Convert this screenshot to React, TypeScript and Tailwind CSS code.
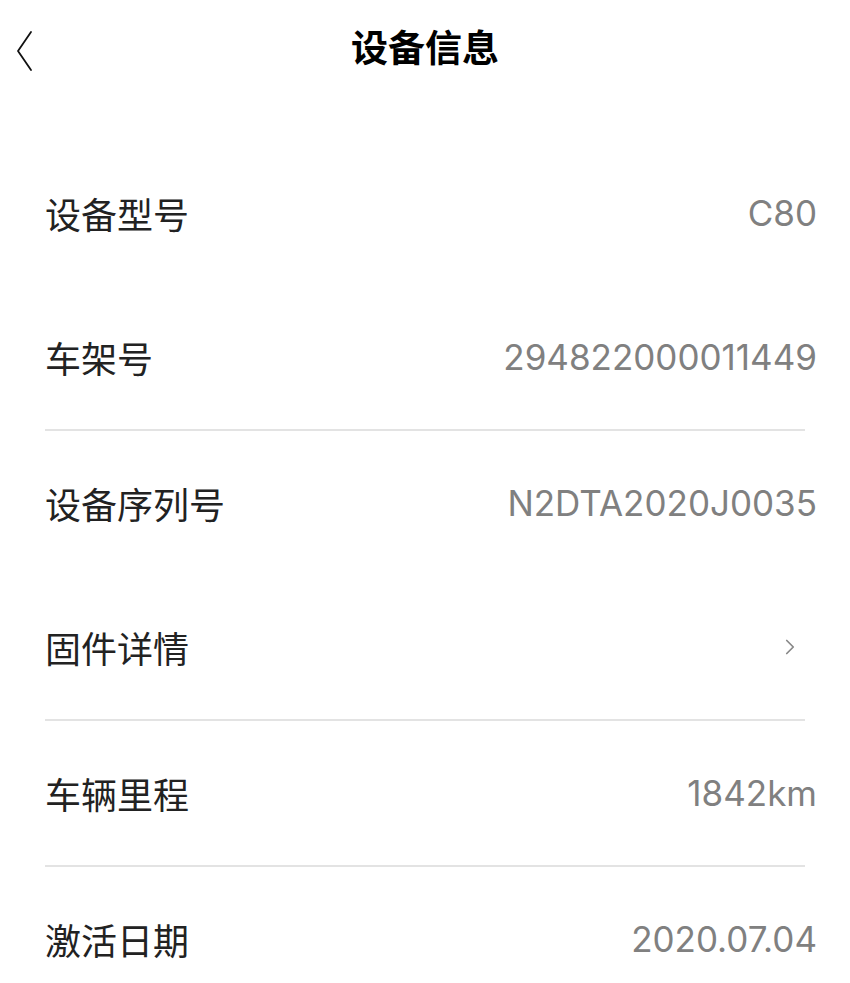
import { ChevronRight } from 'lucide-react';

interface InfoRow {
  label: string;
  value?: string;
  link?: boolean;
  dividerBefore?: boolean;
}

const rows: InfoRow[] = [
  { label: '设备型号', value: 'C80' },
  { label: '车架号', value: '294822000011449' },
  { label: '设备序列号', value: 'N2DTA2020J0035', dividerBefore: true },
  { label: '固件详情', link: true },
  { label: '车辆里程', value: '1842km', dividerBefore: true },
  { label: '激活日期', value: '2020.07.04', dividerBefore: true },
];

export default function App() {
  return (
    <div className="w-[850px] h-[983px] overflow-hidden bg-white font-['Inter','Noto_Sans_CJK_SC',sans-serif]">
      {/* 顶部导航 */}
      <div className="h-[141px]">
        <div className="h-[94px] flex items-center justify-center relative">
          <button className="absolute left-[12px] top-[29px] w-[24px] h-[44px] flex items-center justify-center">
            <svg width="18" height="42" viewBox="0 0 18 42" fill="none">
              <path d="M16 2 L3 21 L16 40" stroke="#111" strokeWidth="1.8" strokeLinecap="round" strokeLinejoin="round" />
            </svg>
          </button>
          <h1 className="text-[37px] font-bold text-black font-['Noto_Sans_CJK_SC',sans-serif]">设备信息</h1>
        </div>
      </div>

      {/* 信息列表 */}
      <div>
        {rows.map((row) => (
          <div key={row.label}>
            {row.dividerBefore && <div className="ml-[45px] w-[760px] h-[2px] bg-[#e3e3e3]" />}
            <div className="h-[144px] pl-[45px] pr-[33px] flex items-center justify-between">
              <span className="text-[36px] text-[#222] font-['Noto_Sans_CJK_SC',sans-serif]">{row.label}</span>
              {row.link ? (
                <ChevronRight className="w-[26px] h-[26px] text-[#888] mr-[14px]" strokeWidth={1.6} />
              ) : (
                <span className="text-[35px] text-[#808080]">{row.value}</span>
              )}
            </div>
          </div>
        ))}
      </div>
    </div>
  );
}
